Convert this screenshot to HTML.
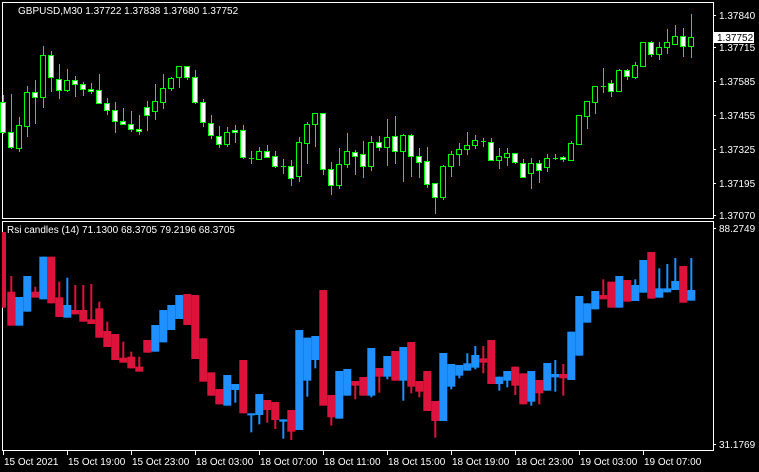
<!DOCTYPE html>
<html><head><meta charset="utf-8"><style>
html,body{margin:0;padding:0;background:#000;width:759px;height:472px;overflow:hidden}
svg{display:block}
text{font-family:"Liberation Sans",sans-serif;font-size:10px;fill:#fff}
</style></head><body>
<svg id="s" width="759" height="472" xmlns="http://www.w3.org/2000/svg">
<rect x="2.5" y="2.5" width="711" height="216" fill="none" stroke="#fff" stroke-width="1"/>
<rect x="2.5" y="221.5" width="711" height="229" fill="none" stroke="#fff" stroke-width="1"/>
<text x="18" y="14">GBPUSD,M30  1.37722 1.37838 1.37680 1.37752</text>
<text x="7" y="233">Rsi candles (14) 71.1300 68.3705 79.2196 68.3705</text>
<g id="axis"></g>
<g id="c"></g>
<rect x="714" y="32" width="40" height="11" fill="#fff"/>
<text x="717" y="41" style="fill:#000">1.37752</text>
</svg>
<script>
var NS="http://www.w3.org/2000/svg",c=document.getElementById('c'),ax=document.getElementById('axis');
function el(t,a,p){var e=document.createElementNS(NS,t);for(var k in a)e.setAttribute(k,a[k]);(p||c).appendChild(e);return e;}
function tx(x,y,s){var e=el('text',{x:x,y:y},ax);e.textContent=s;}
// price labels
[[1.37840,15],[1.37715,47],[1.37585,81],[1.37455,115],[1.37325,149],[1.37195,183],[1.37070,215]].forEach(function(p){
 el('rect',{x:713,y:p[1],width:3,height:1,fill:'#fff'},ax);tx(719,p[1]+4,p[0].toFixed(5));});
el('rect',{x:713,y:228,width:3,height:1,fill:'#fff'},ax);tx(719,232,'88.2749');
el('rect',{x:713,y:444,width:3,height:1,fill:'#fff'},ax);tx(719,448,'31.1769');
var tl=['15 Oct 2021','15 Oct 19:00','15 Oct 23:00','18 Oct 03:00','18 Oct 07:00','18 Oct 11:00','18 Oct 15:00','18 Oct 19:00','18 Oct 23:00','19 Oct 03:00','19 Oct 07:00'];
tl.forEach(function(s,i){var x=3+64*i;el('rect',{x:x,y:451,width:1,height:4,fill:'#fff'},ax);tx(x+1,465,s);});
// main candles: [top,bottom,high,low,filled]
var m=[[102,132,95,133,1],[132,147,94,148,1],[125,148,117,151,0],[92,126,86,136,0],[92,97,80,123,1],[55,97,46,107,0],[55,77,51,91,1],[79,90,64,98,1],[80,90,69,91,0],[80,84,76,96,1],[84,89,82,95,1],[89,91,83,93,1],[90,103,74,103,1],[103,110,98,114,1],[110,121,102,132,1],[121,124,108,124,1],[124,129,111,131,1],[129,131,115,134,1],[107,115,101,130,1],[101,111,84,119,0],[88,102,74,108,0],[78,88,77,90,0],[66,77,66,87,0],[66,77,66,79,1],[77,102,70,103,1],[102,122,99,126,1],[123,135,115,138,1],[136,144,126,147,1],[132,144,127,146,0],[130,132,125,142,1],[130,157,125,158,1],[158,158,151,163,2],[151,159,147,159,0],[151,157,145,157,1],[156,166,151,167,1],[166,166,159,173,2],[166,178,160,185,1],[142,176,137,181,0],[124,143,122,163,0],[113,124,113,146,0],[113,169,113,174,1],[169,185,162,194,1],[164,185,148,188,0],[151,164,133,167,0],[152,156,150,174,1],[154,166,141,177,1],[142,166,136,170,0],[142,147,136,150,1],
[137,147,119,165,0],[136,151,116,163,1],[135,151,134,181,0],[135,156,134,176,1],[156,162,148,177,1],[161,184,147,187,1],[183,197,183,213,1],[166,197,165,199,0],[154,166,151,176,0],[149,154,143,165,0],[145,149,132,154,0],[140,145,135,148,0],[141,141,138,146,2],[142,160,138,160,1],[156,160,148,168,0],[153,157,148,165,0],[153,162,153,163,1],[163,177,159,177,1],[163,173,158,188,0],[163,170,160,182,1],[158,167,154,171,0],[158,158,154,159,2],[157,159,156,161,1],[143,160,141,160,0],[115,144,115,144,0],[101,116,101,128,0],[86,102,86,113,0],[86,86,68,92,2],[83,91,80,96,1],[70,91,69,91,0],[70,76,69,79,1],[65,77,62,78,0],[42,66,42,66,0],[42,54,41,56,1],[47,54,42,59,0],[42,47,29,53,0],[36,44,25,44,0],[36,46,28,56,1],[37,46,14,57,0]];
m.forEach(function(d,i){var x=Math.round(3.3+8*i);
 el('rect',{x:x,y:d[2],width:1,height:d[3]-d[2]+1,fill:'#0f0'});
 if(d[4]==2){el('rect',{x:x-2,y:d[0],width:5,height:1,fill:'#0f0'});}
 else el('rect',{x:x-2.5,y:d[0]+0.5,width:5,height:Math.max(d[1]-d[0],1),fill:d[4]?'#fff':'#000',stroke:'#0f0','stroke-width':1});
});
// rsi candles in zoom coords: [color, top, bottom, wickTop, wickBottom]
var R='#dc143c',B='#1e90ff';
var r=[[R,36,263,36,263],[R,215,317,168,317],[B,231,317,231,317],[B,168,275,168,275],[R,215,233,200,233],[B,110,238,110,238],[R,110,250,110,250],[R,232,291,185,291],[B,255,293,173,293],[R,270,283,195,283],[R,270,305,195,305],[R,298,312,192,312],[R,265,353,245,353],[R,333,381,305,381],[R,342,420,342,420],[R,413,428,365,428],[R,410,445,395,445],[R,440,455,410,455],[R,360,398,360,398],[B,315,395,315,395],[B,270,367,270,367],[B,255,330,255,330],[B,225,297,225,297],[R,222,315,222,315],[R,225,417,225,417],[R,355,485,355,485],[R,457,527,457,527],[R,507,553,507,553],[B,465,557,465,557],[B,492,510,492,548],[R,420,580,420,580],[B,580,585,580,637],[B,522,585,522,613],[R,540,570,540,608],[R,546,600,546,627],[B,598,605,598,656],[R,570,635,570,660],[B,330,630,330,630],[B,353,482,353,530],[B,348,420,348,445],[R,210,557,210,557],[R,525,592,525,617],[B,453,596,453,596],[B,447,527,447,527],[R,483,497,483,538],[R,471,527,471,527],[B,384,527,384,532],[R,444,470,444,518],
[B,408,470,408,478],[R,393,482,393,482],[B,381,482,381,542],[R,366,500,366,520],[R,483,515,483,532],[R,453,573,453,573],[R,543,603,543,653],[B,399,603,399,603],[B,432,500,432,508],[B,435,467,435,475],[B,430,452,400,452],[B,405,443,378,448],[R,415,428,378,460],[R,360,492,360,492],[B,470,492,470,512],[B,453,482,453,502],[R,440,497,440,525],[R,460,553,460,553],[B,453,545,453,557],[R,480,520,480,553],[B,429,512,429,512],[B,462,472,420,515],[R,462,475,432,527],[B,335,480,335,480],[B,228,407,228,407],[B,250,308,250,308],[B,213,268,213,268],[R,225,238,178,238],[R,185,263,185,263],[B,168,263,168,263],[R,180,245,180,245],[B,195,243,178,243],[B,120,218,120,218],[R,96,236,96,236],[B,205,233,145,233],[B,205,217,132,217],[B,183,210,114,210],[R,138,248,138,248],[B,210,242,114,242]];
r.forEach(function(d,i){var x=3.3+8*i,f=function(z){return 220+z/3;};
 var t=f(d[1]),b=f(d[2]),wt=f(d[3]),wb=f(d[4]);
 el('rect',{x:x-1,y:wt,width:2,height:wb-wt,fill:d[0]});
 el('rect',{x:(i==0?x-1.3:x-4),y:t,width:(i==0?4:8),height:Math.max(b-t,2),fill:d[0]});
});
</script>
</body></html>
